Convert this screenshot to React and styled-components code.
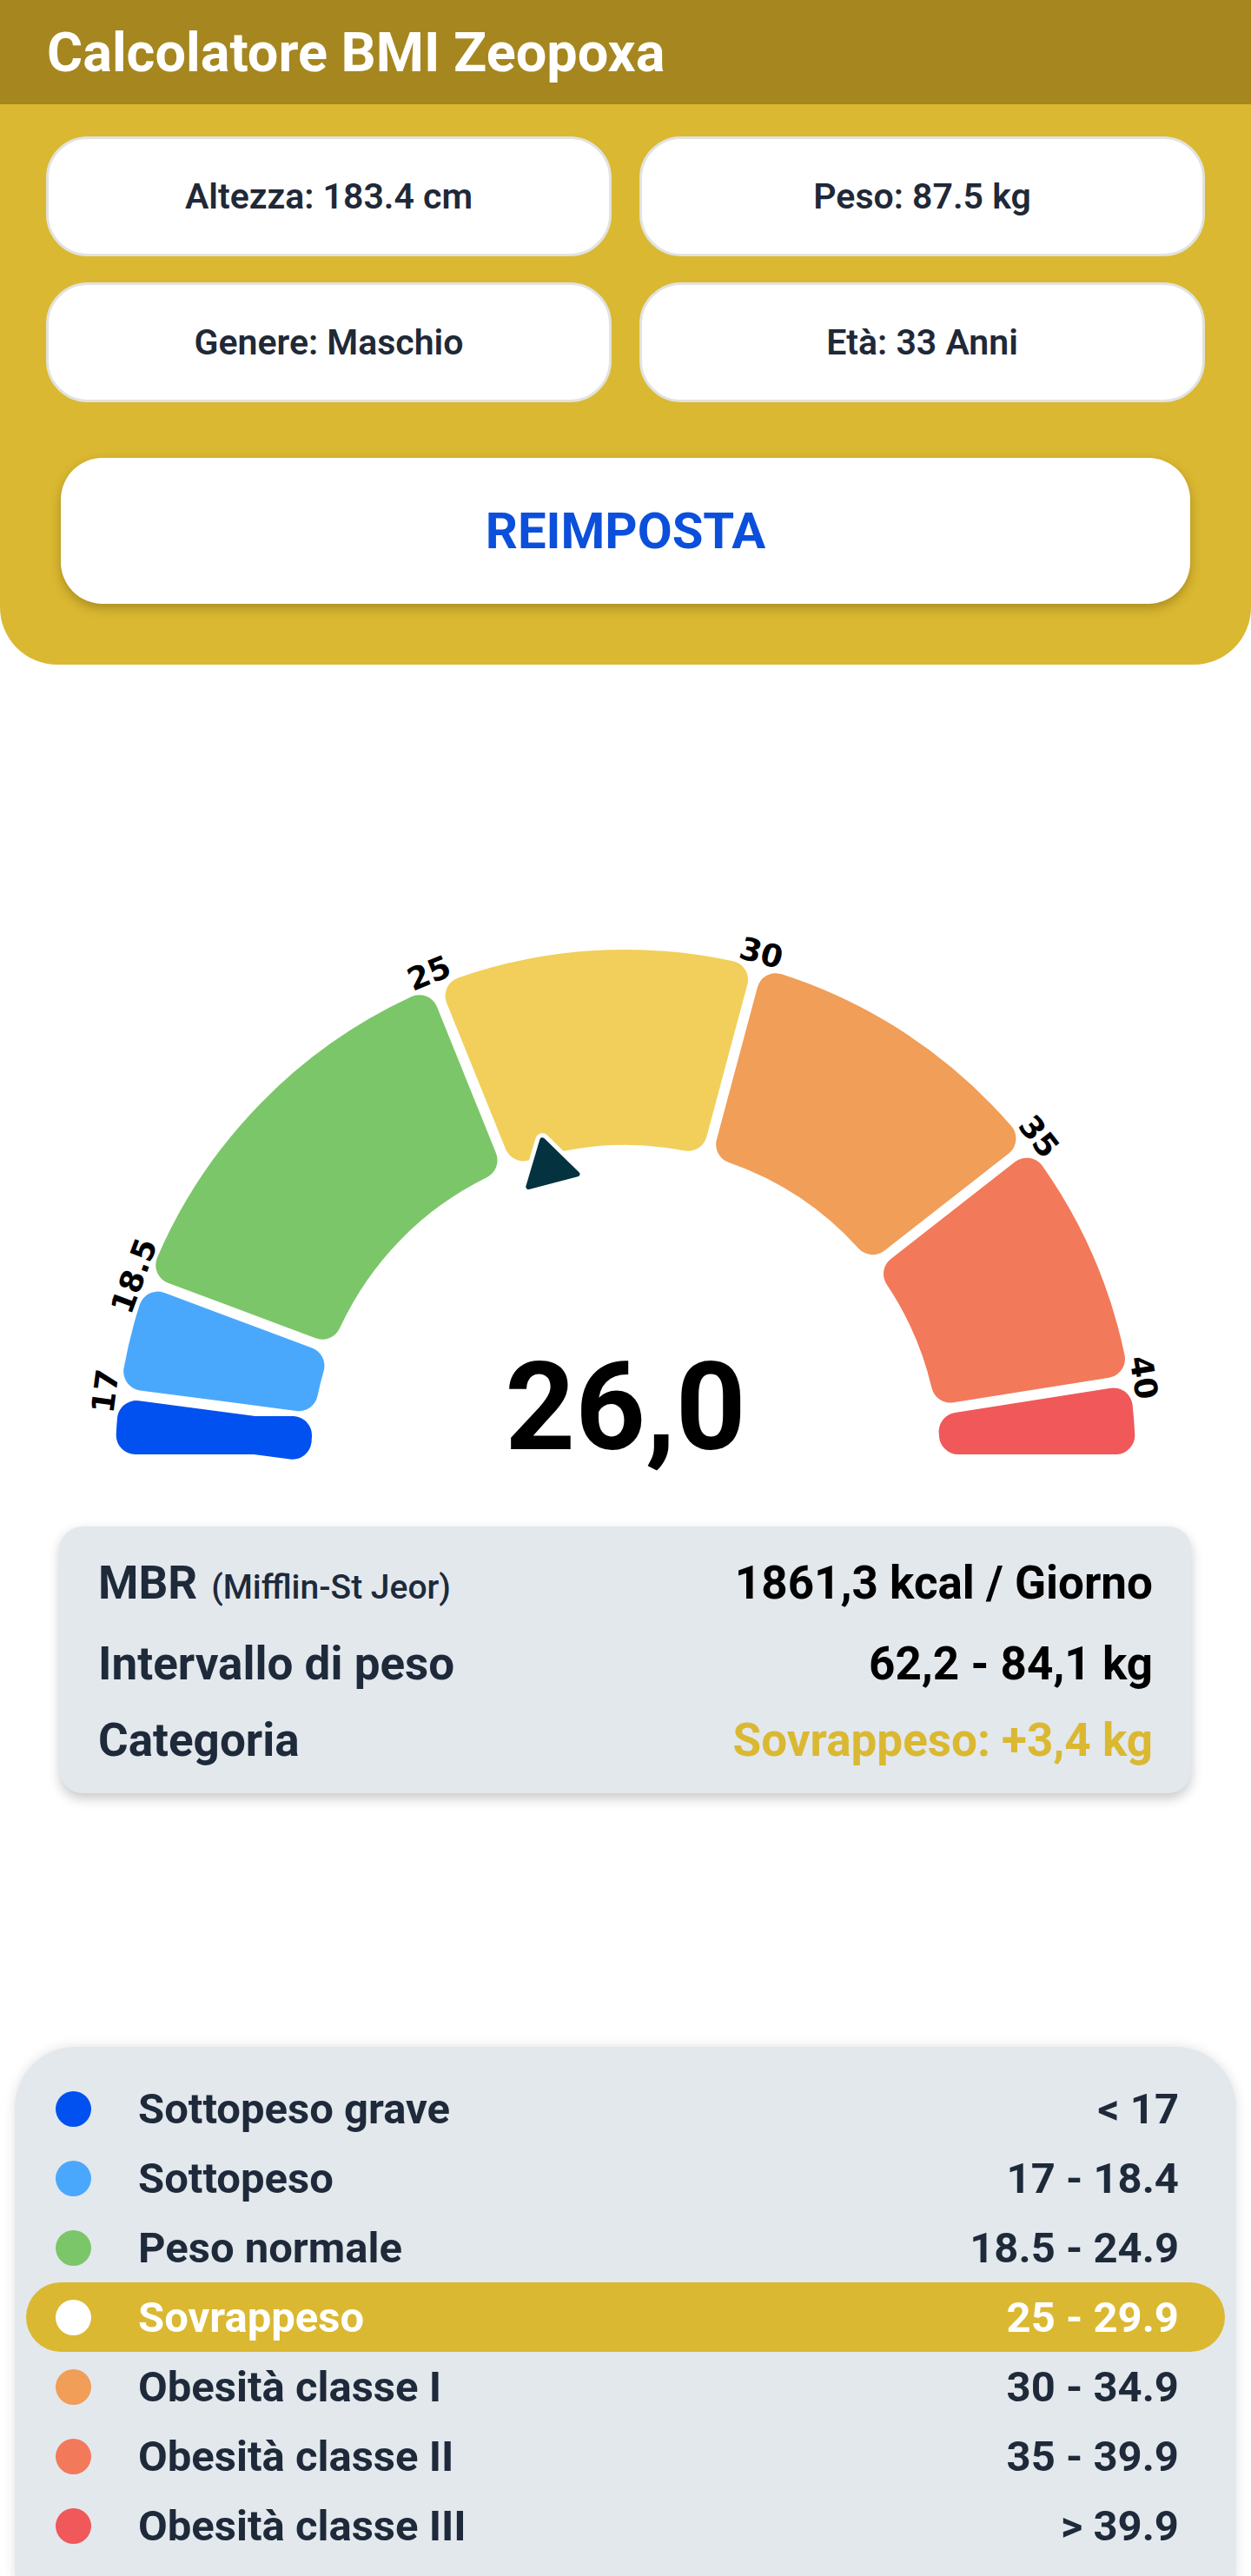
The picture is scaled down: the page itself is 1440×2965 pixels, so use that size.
import styled, { createGlobalStyle } from 'styled-components';

const GlobalStyle = createGlobalStyle`
	html, body {
		margin: 0;
		padding: 0;
		background: #ffffff;
		font-family: Roboto, "Liberation Sans", sans-serif;
	}
	* {
		box-sizing: border-box;
	}
`;

const YELLOW = '#dab831';
const NAVY = '#1e2a3a';

const Page = styled.div`
	width: 1440px;
	overflow: hidden;
`;

const TopPanel = styled.section`
	background: ${YELLOW};
	border-radius: 0 0 66px 66px;
	padding-bottom: 70px;
`;

const Header = styled.header`
	height: 120px;
	background: #a6861f;
	display: flex;
	align-items: center;
	padding-left: 54px;
	color: #ffffff;
	font-size: 63px;
	font-weight: 700;
`;

const FieldGrid = styled.div`
	display: grid;
	grid-template-columns: 1fr 1fr;
	gap: 30px 32px;
	padding: 37px 53px 0;
`;

const Field = styled.div`
	height: 138px;
	background: #ffffff;
	border: 3px solid #e1e3df;
	border-radius: 48px;
	display: flex;
	align-items: center;
	justify-content: center;
	font-size: 41px;
	font-weight: 600;
	color: #1f2937;
`;

const ResetButton = styled.button`
	display: block;
	width: calc(100% - 140px);
	height: 168px;
	margin: 64px 70px 0;
	border: none;
	border-radius: 48px;
	background: #ffffff;
	box-shadow: 0 5px 12px rgba(80, 60, 0, 0.35);
	font-family: Roboto, "Liberation Sans", sans-serif;
	font-size: 58px;
	font-weight: 700;
	color: #0b4fdb;
`;

const GaugeWrap = styled.div`
	margin-top: 275px;
	svg {
		display: block;
	}
`;

const InfoCard = styled.div`
	margin: 37px 69px 0;
	padding: 21px 44px 17px;
	background: #e3e8ed;
	border-radius: 26px;
	box-shadow: 0 6px 14px rgba(0, 0, 0, 0.22);
`;

const InfoRow = styled.div`
	display: flex;
	justify-content: space-between;
	align-items: baseline;
	line-height: 88px;
	white-space: nowrap;
`;

const InfoLabel = styled.span`
	font-size: 53px;
	font-weight: 700;
	color: ${NAVY};
`;

const SubLabel = styled.span`
	font-size: 39px;
	font-weight: 500;
	margin-left: 16px;
`;

const InfoValue = styled.span`
	font-size: 53px;
	font-weight: 700;
	color: ${props => props.$color || '#000000'};
`;

const LegendCard = styled.div`
	margin: 292px 17px 0;
	padding: 31px 13px 80px;
	background: #e3e8ed;
	border-radius: 70px;
	box-shadow: 0 0 14px rgba(0, 0, 0, 0.12);
`;

const LegendRow = styled.div`
	height: 80px;
	display: flex;
	align-items: center;
	padding: 0 53px 0 34px;
	border-radius: 40px;
	background: ${props => props.$active ? YELLOW : 'transparent'};
	color: ${props => props.$active ? '#ffffff' : NAVY};
	font-size: 49px;
	font-weight: 700;
`;

const Dot = styled.span`
	width: 41px;
	height: 41px;
	border-radius: 50%;
	flex: none;
	margin-right: 54px;
	background: ${props => props.$color};
`;

const LegendName = styled.span`
	flex: 1;
`;

const fields = [
	'Altezza: 183.4 cm',
	'Peso: 87.5 kg',
	'Genere: Maschio',
	'Età: 33 Anni'
];

const categories = [
	{ name: 'Sottopeso grave', range: '< 17', color: '#0051f0' },
	{ name: 'Sottopeso', range: '17 - 18.4', color: '#4aa8fc' },
	{ name: 'Peso normale', range: '18.5 - 24.9', color: '#7bc669' },
	{ name: 'Sovrappeso', range: '25 - 29.9', color: '#f1cf5a' },
	{ name: 'Obesità classe I', range: '30 - 34.9', color: '#f09e58' },
	{ name: 'Obesità classe II', range: '35 - 39.9', color: '#f2795a' },
	{ name: 'Obesità classe III', range: '> 39.9', color: '#f0585a' }
];

// gauge geometry, page coordinates
const CX = 720;
const CY = 1680;
const R_OUT = 587;
const R_IN = 362;
const HALF_GAP = 6;
const CORNER = 22;
const bounds = [180, 172.5, 159.5, 112, 75, 38, 9, 0];
const ticks = [
	{ label: '17', angle: 172.5 },
	{ label: '18.5', angle: 159.5 },
	{ label: '25', angle: 112 },
	{ label: '30', angle: 75 },
	{ label: '35', angle: 38 },
	{ label: '40', angle: 9 }
];

const rad = d => d * Math.PI / 180;
const pt = (r, deg) => [CX + r * Math.cos(rad(deg)), CY - r * Math.sin(rad(deg))];
const f = n => n.toFixed(2);

function sectorPath (a1, a2) {
	const d = HALF_GAP + CORNER;
	const ro = R_OUT - CORNER;
	const ri = R_IN + CORNER;
	const off = r => Math.asin(d / r) * 180 / Math.PI;
	const p1 = pt(ro, a1 - off(ro));
	const p2 = pt(ro, a2 + off(ro));
	const p3 = pt(ri, a2 + off(ri));
	const p4 = pt(ri, a1 - off(ri));
	return `M${f(p1[0])} ${f(p1[1])} A${ro} ${ro} 0 0 1 ${f(p2[0])} ${f(p2[1])} L${f(p3[0])} ${f(p3[1])} A${ri} ${ri} 0 0 0 ${f(p4[0])} ${f(p4[1])} Z`;
}

function needlePath (deg, tipR, baseR, half) {
	const tip = pt(tipR, deg);
	const base = pt(baseR, deg);
	const nx = Math.sin(rad(deg));
	const ny = Math.cos(rad(deg));
	const b1 = [base[0] + nx * half, base[1] + ny * half];
	const b2 = [base[0] - nx * half, base[1] - ny * half];
	return `M${f(tip[0])} ${f(tip[1])} L${f(b1[0])} ${f(b1[1])} L${f(b2[0])} ${f(b2[1])} Z`;
}

function Gauge ({ bmi }) {
	const needleAngle = 112 - (bmi - 25) / 5 * 37;
	return (
		<svg width="1440" height="680" viewBox="0 1040 1440 680">
			{categories.map((c, i) => (
				<path
					key={c.name}
					d={sectorPath(bounds[i], bounds[i + 1])}
					fill={c.color}
					stroke={c.color}
					strokeWidth={CORNER * 2}
					strokeLinejoin="round"
				/>
			))}
			{ticks.map(t => {
				const [x, y] = pt(604, t.angle);
				return (
					<text
						key={t.label}
						x={x}
						y={y}
						transform={`rotate(${90 - t.angle} ${x} ${y})`}
						textAnchor="middle"
						dominantBaseline="central"
						fontFamily="'DejaVu Sans', sans-serif"
						fontWeight="700"
						fontSize="36"
						fill="#000"
					>
						{t.label}
					</text>
				);
			})}
			<path d={needlePath(needleAngle, 380, 332, 29)} fill="#ffffff" stroke="#ffffff" strokeWidth="16" strokeLinejoin="round" />
			<path d={needlePath(needleAngle, 380, 332, 29)} fill="#04333f" stroke="#04333f" strokeWidth="6" strokeLinejoin="round" />
			<text
				x={CX}
				y={1668}
				textAnchor="middle"
				fontFamily="Roboto, 'Liberation Sans', sans-serif"
				fontWeight="700"
				fontSize="141"
				fill="#000"
			>
				{bmi.toFixed(1).replace('.', ',')}
			</text>
		</svg>
	);
}

export default function App () {
	return (
		<Page>
			<GlobalStyle />
			<TopPanel>
				<Header>Calcolatore BMI Zeopoxa</Header>
				<FieldGrid>
					{fields.map(text => <Field key={text}>{text}</Field>)}
				</FieldGrid>
				<ResetButton>REIMPOSTA</ResetButton>
			</TopPanel>
			<GaugeWrap>
				<Gauge bmi={26.0} />
			</GaugeWrap>
			<InfoCard>
				<InfoRow>
					<InfoLabel>MBR<SubLabel>(Mifflin-St Jeor)</SubLabel></InfoLabel>
					<InfoValue>1861,3 kcal / Giorno</InfoValue>
				</InfoRow>
				<InfoRow>
					<InfoLabel>Intervallo di peso</InfoLabel>
					<InfoValue>62,2 - 84,1 kg</InfoValue>
				</InfoRow>
				<InfoRow>
					<InfoLabel>Categoria</InfoLabel>
					<InfoValue $color={YELLOW}>Sovrappeso: +3,4 kg</InfoValue>
				</InfoRow>
			</InfoCard>
			<LegendCard>
				{categories.map(c => {
					const active = c.name === 'Sovrappeso';
					return (
						<LegendRow key={c.name} $active={active}>
							<Dot $color={active ? '#ffffff' : c.color} />
							<LegendName>{c.name}</LegendName>
							<span>{c.range}</span>
						</LegendRow>
					);
				})}
			</LegendCard>
		</Page>
	);
}
